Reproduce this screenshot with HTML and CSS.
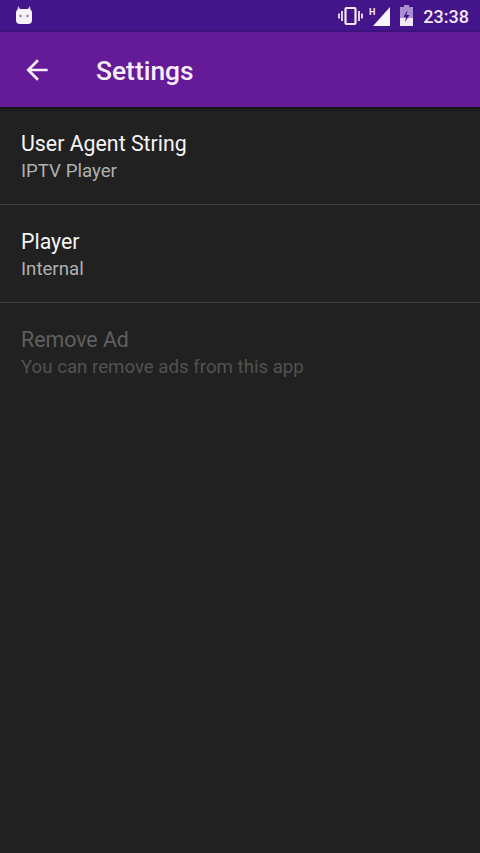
FILE: index.html
```html
<!DOCTYPE html>
<html lang="en">
<head>
    <meta charset="UTF-8">
    <title>Settings</title>
    <link rel="stylesheet" href="styles.css">
</head>
<body>
    <div class="status-bar">
        <svg class="android-icon" width="16" height="18" viewBox="0 0 16 18">
            <path d="M2 0l3 4h6l3-4 1 7H1z" fill="#d9c8e4"/>
            <rect x="0" y="3" width="16" height="15" rx="4" fill="#f8f2fa"/>
            <circle cx="4.5" cy="10" r="1.2" fill="#8d7a9a"/>
            <circle cx="11.5" cy="10" r="1.2" fill="#8d7a9a"/>
        </svg>
        <div class="status-right">
            <svg width="25" height="20" viewBox="0 0 25 20" fill="none" stroke="#f3e9f6">
                <rect x="7.5" y="2" width="10" height="16" rx="1" stroke-width="2.2"/>
                <path d="M4 5v10M1 7.5v5M21 5v10M24 7.5v5" stroke-width="1.8"/>
            </svg>
            <div class="signal">
                <span class="network">H</span>
                <svg width="17" height="19" viewBox="0 0 17 19">
                    <path d="M17 0v19H0z" fill="#f8f2fa"/>
                </svg>
            </div>
            <svg class="battery" width="13" height="21" viewBox="0 0 13 21">
                <path d="M4 0h5v2h4v19H0V2h4z" fill="#a98fd0"/>
                <path d="M0 13h13v8H0z" fill="#f3e9f6"/>
                <path d="M7.5 5L3.5 12h2.5l-1 5 4.5-7H6.5z" fill="#43148a"/>
            </svg>
            <span class="clock">23:38</span>
        </div>
    </div>

    <div class="toolbar">
        <svg class="back-icon" width="32" height="32" viewBox="0 0 24 24">
            <path d="M20 11H7.83l5.59-5.59L12 4l-8 8 8 8 1.41-1.41L7.83 13H20v-2z" fill="#f8eefa"/>
        </svg>
        <h1>Settings</h1>
    </div>

    <div class="settings-list">
        <div class="setting-item">
            <div class="setting-title">User Agent String</div>
            <div class="setting-summary">IPTV Player</div>
        </div>
        <div class="setting-item">
            <div class="setting-title">Player</div>
            <div class="setting-summary">Internal</div>
        </div>
        <div class="setting-item disabled">
            <div class="setting-title">Remove Ad</div>
            <div class="setting-summary">You can remove ads from this app</div>
        </div>
    </div>
</body>
</html>
```

FILE: styles.css
```css
html, body {
    height: 100%;
}
body {
    margin: 0;
    background-color: #212121;
    font-family: Roboto, "Liberation Sans", sans-serif;
    overflow: hidden;
}
.status-bar {
    height: 32px;
    display: flex;
    align-items: center;
    justify-content: space-between;
    padding: 0 11px 0 16px;
    background-color: #43148a;
    color: #f3e9f6;
}
.android-icon {
    margin-bottom: 2px;
}
.status-right {
    display: flex;
    align-items: center;
}
.signal {
    display: flex;
    align-items: flex-start;
    margin-left: 6px;
    padding-top: 1px;
}
.network {
    font-size: 9px;
    font-weight: 700;
    line-height: 10px;
    margin-right: -2px;
}
.battery {
    margin-left: 10px;
    margin-top: -2px;
}
.clock {
    font-size: 18px;
    font-weight: 500;
    margin-left: 10px;
}
.toolbar {
    height: 75px;
    display: flex;
    align-items: center;
    gap: 43px;
    padding-left: 21px;
    background-color: #651a98;
    box-shadow: 0 1px 3px rgba(0,0,0,0.6);
}
.toolbar h1 {
    margin: 2px 0 0;
    font-size: 26.4px;
    font-weight: 500;
    color: #f8eefa;
}
.setting-item {
    height: 98px;
    box-sizing: border-box;
    padding: 22px 21px 0;
    border-bottom: 1px solid #3e3e3e;
}
.setting-item:last-child {
    border-bottom: none;
}
.setting-title {
    font-size: 21.33px;
    line-height: 30px;
    color: #f5f5f5;
}
.setting-summary {
    font-size: 18.67px;
    line-height: 24px;
    color: #b0b0b0;
}
.disabled .setting-title {
    color: #5f5f5f;
}
.disabled .setting-summary {
    color: #525252;
}
```
